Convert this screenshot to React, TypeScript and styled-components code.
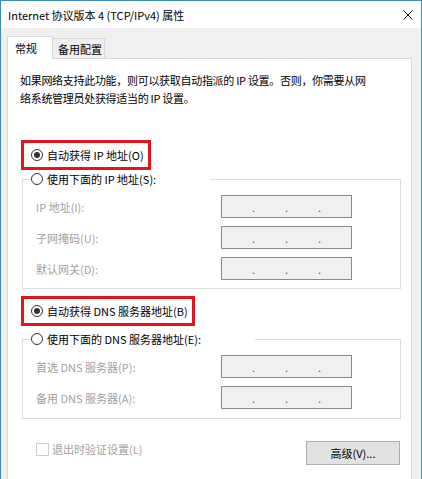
import React from "react";
import styled, { createGlobalStyle } from "styled-components";

const GlobalStyle = createGlobalStyle`
  body {
    margin: 0;
    background: #ffffff;
  }
  * {
    box-sizing: border-box;
  }
`;

const Window = styled.div`
  width: 422px;
  height: 479px;
  overflow: hidden;
  border: 1px solid #3a8dba;
  border-bottom: none;
  background: #f0f0f0;
  font-family: "Noto Sans CJK SC", "Noto Sans", sans-serif;
  font-size: 11px;
  color: #000;
  display: flex;
  flex-direction: column;
`;

const TitleBar = styled.div`
  height: 27px;
  flex-shrink: 0;
  background: #ffffff;
  display: flex;
  align-items: center;
  justify-content: space-between;
  padding: 0 8px 0 7px;
`;

const Title = styled.span`
  font-size: 11px;
`;

const Body = styled.div`
  padding: 8px 9px 0 6px;
  display: flex;
  flex-direction: column;
`;

const TabRow = styled.div`
  display: flex;
  align-items: flex-end;
`;

const Tab = styled.div<{ $active?: boolean }>`
  position: relative;
  z-index: 1;
  display: flex;
  align-items: center;
  border: 1px solid #d9d9d9;
  ${(p) =>
    p.$active
      ? `
    height: 23px;
    width: 46px;
    margin-bottom: -1px;
    padding-left: 7px;
    background: #ffffff;
    border-bottom: none;
  `
      : `
    height: 20px;
    width: 52px;
    padding-left: 5px;
    background: #f0f0f0;
    border-left: none;
    border-bottom: none;
  `}
`;

const Panel = styled.div`
  height: 440px;
  flex-shrink: 0;
  background: #ffffff;
  border: 1px solid #d9d9d9;
  padding: 12px 10px 0 12px;
  display: flex;
  flex-direction: column;
  align-items: flex-start;
`;

const Intro = styled.p`
  margin: 0;
  line-height: 18px;
  letter-spacing: -0.3px;
`;

const Highlight = styled.div<{ $top: number }>`
  margin-top: ${(p) => p.$top}px;
  margin-left: 1px;
  height: 30px;
  border: 3px solid #e3141c;
  display: flex;
  align-items: center;
  padding: 0 4px 0 7px;
`;

const RadioRow = styled.label`
  display: flex;
  align-items: center;
  gap: 4px;
  line-height: 18px;
  white-space: nowrap;
`;

const RadioCircle = styled.span<{ $checked?: boolean }>`
  width: 12px;
  height: 12px;
  flex-shrink: 0;
  border-radius: 50%;
  border: 1px solid #333333;
  display: inline-flex;
  align-items: center;
  justify-content: center;
  &::after {
    content: "";
    width: 6px;
    height: 6px;
    border-radius: 50%;
    background: ${(p) => (p.$checked ? "#333333" : "transparent")};
  }
`;

const Group = styled.fieldset<{ $top: number; $bottom: number }>`
  align-self: stretch;
  margin: ${(p) => p.$top}px 0 0 2px;
  padding: 0 0 ${(p) => p.$bottom}px 0;
  border: 1px solid #dcdcdc;
  min-width: 0;
`;

const Legend = styled.legend<{ $width: number }>`
  margin-left: 8px;
  padding: 0;
  width: ${(p) => p.$width}px;
  height: 18px;
  display: flex;
  align-items: center;
  background: #ffffff;
`;

const FieldGrid = styled.div`
  margin-top: 7px;
  padding-left: 13px;
  display: grid;
  grid-template-columns: 185px 131px;
  row-gap: 8px;
  align-items: center;
`;

const FieldLabel = styled.span`
  color: #a0a0a0;
`;

const IpField = styled.div`
  width: 131px;
  height: 23px;
  background: #f0f0f0;
  border: 1px solid #8a8a8a;
  display: flex;
  align-items: center;
`;

const Octet = styled.span`
  flex: 1;
`;

const Dot = styled.span`
  width: 3px;
  display: flex;
  justify-content: center;
  color: #555555;
  font-size: 11px;
  line-height: 1;
  padding-top: 2px;
`;

const Footer = styled.div`
  align-self: stretch;
  display: flex;
  justify-content: space-between;
  align-items: flex-start;
  padding: 21px 1px 0 16px;
`;

const CheckRow = styled.label`
  display: flex;
  align-items: center;
  gap: 3px;
  line-height: 18px;
  color: #a0a0a0;
`;

const CheckBox = styled.span`
  width: 13px;
  height: 13px;
  border: 1px solid #cccccc;
  background: #ffffff;
`;

const Button = styled.button`
  margin-top: 1px;
  width: 94px;
  height: 24px;
  background: #e1e1e1;
  border: 1px solid #adadad;
  font-family: inherit;
  font-size: 11px;
  color: #000;
  padding: 0;
`;

const CloseIcon = () => (
  <svg width="10" height="10" viewBox="0 0 10 10">
    <path d="M0.5 0.5 L9.5 9.5 M9.5 0.5 L0.5 9.5" stroke="#111" strokeWidth="1" fill="none" />
  </svg>
);

const IpBox = () => (
  <IpField>
    <Octet />
    <Dot>.</Dot>
    <Octet />
    <Dot>.</Dot>
    <Octet />
    <Dot>.</Dot>
    <Octet />
  </IpField>
);

const Radio = ({ checked, text }: { checked?: boolean; text: string }) => (
  <RadioRow>
    <RadioCircle $checked={checked} />
    <span>{text}</span>
  </RadioRow>
);

const App = () => {
  return (
    <>
      <GlobalStyle />
      <Window>
        <TitleBar>
          <Title>Internet 协议版本 4 (TCP/IPv4) 属性</Title>
          <CloseIcon />
        </TitleBar>
        <Body>
          <TabRow>
            <Tab $active>常规</Tab>
            <Tab>备用配置</Tab>
          </TabRow>
          <Panel>
            <Intro>
              如果网络支持此功能，则可以获取自动指派的 IP 设置。否则，你需要从网
              <br />
              络系统管理员处获得适当的 IP 设置。
            </Intro>

            <Highlight $top={33}>
              <Radio checked text="自动获得 IP 地址(O)" />
            </Highlight>

            <Group $top={0} $bottom={8}>
              <Legend $width={179}>
                <Radio text="使用下面的 IP 地址(S):" />
              </Legend>
              <FieldGrid>
                <FieldLabel>IP 地址(I):</FieldLabel>
                <IpBox />
                <FieldLabel>子网掩码(U):</FieldLabel>
                <IpBox />
                <FieldLabel>默认网关(D):</FieldLabel>
                <IpBox />
              </FieldGrid>
            </Group>

            <Highlight $top={7}>
              <Radio checked text="自动获得 DNS 服务器地址(B)" />
            </Highlight>

            <Group $top={4} $bottom={9}>
              <Legend $width={224}>
                <Radio text="使用下面的 DNS 服务器地址(E):" />
              </Legend>
              <FieldGrid>
                <FieldLabel>首选 DNS 服务器(P):</FieldLabel>
                <IpBox />
                <FieldLabel>备用 DNS 服务器(A):</FieldLabel>
                <IpBox />
              </FieldGrid>
            </Group>

            <Footer>
              <CheckRow>
                <CheckBox />
                <span>退出时验证设置(L)</span>
              </CheckRow>
              <Button>高级(V)...</Button>
            </Footer>
          </Panel>
        </Body>
      </Window>
    </>
  );
};

export default App;
